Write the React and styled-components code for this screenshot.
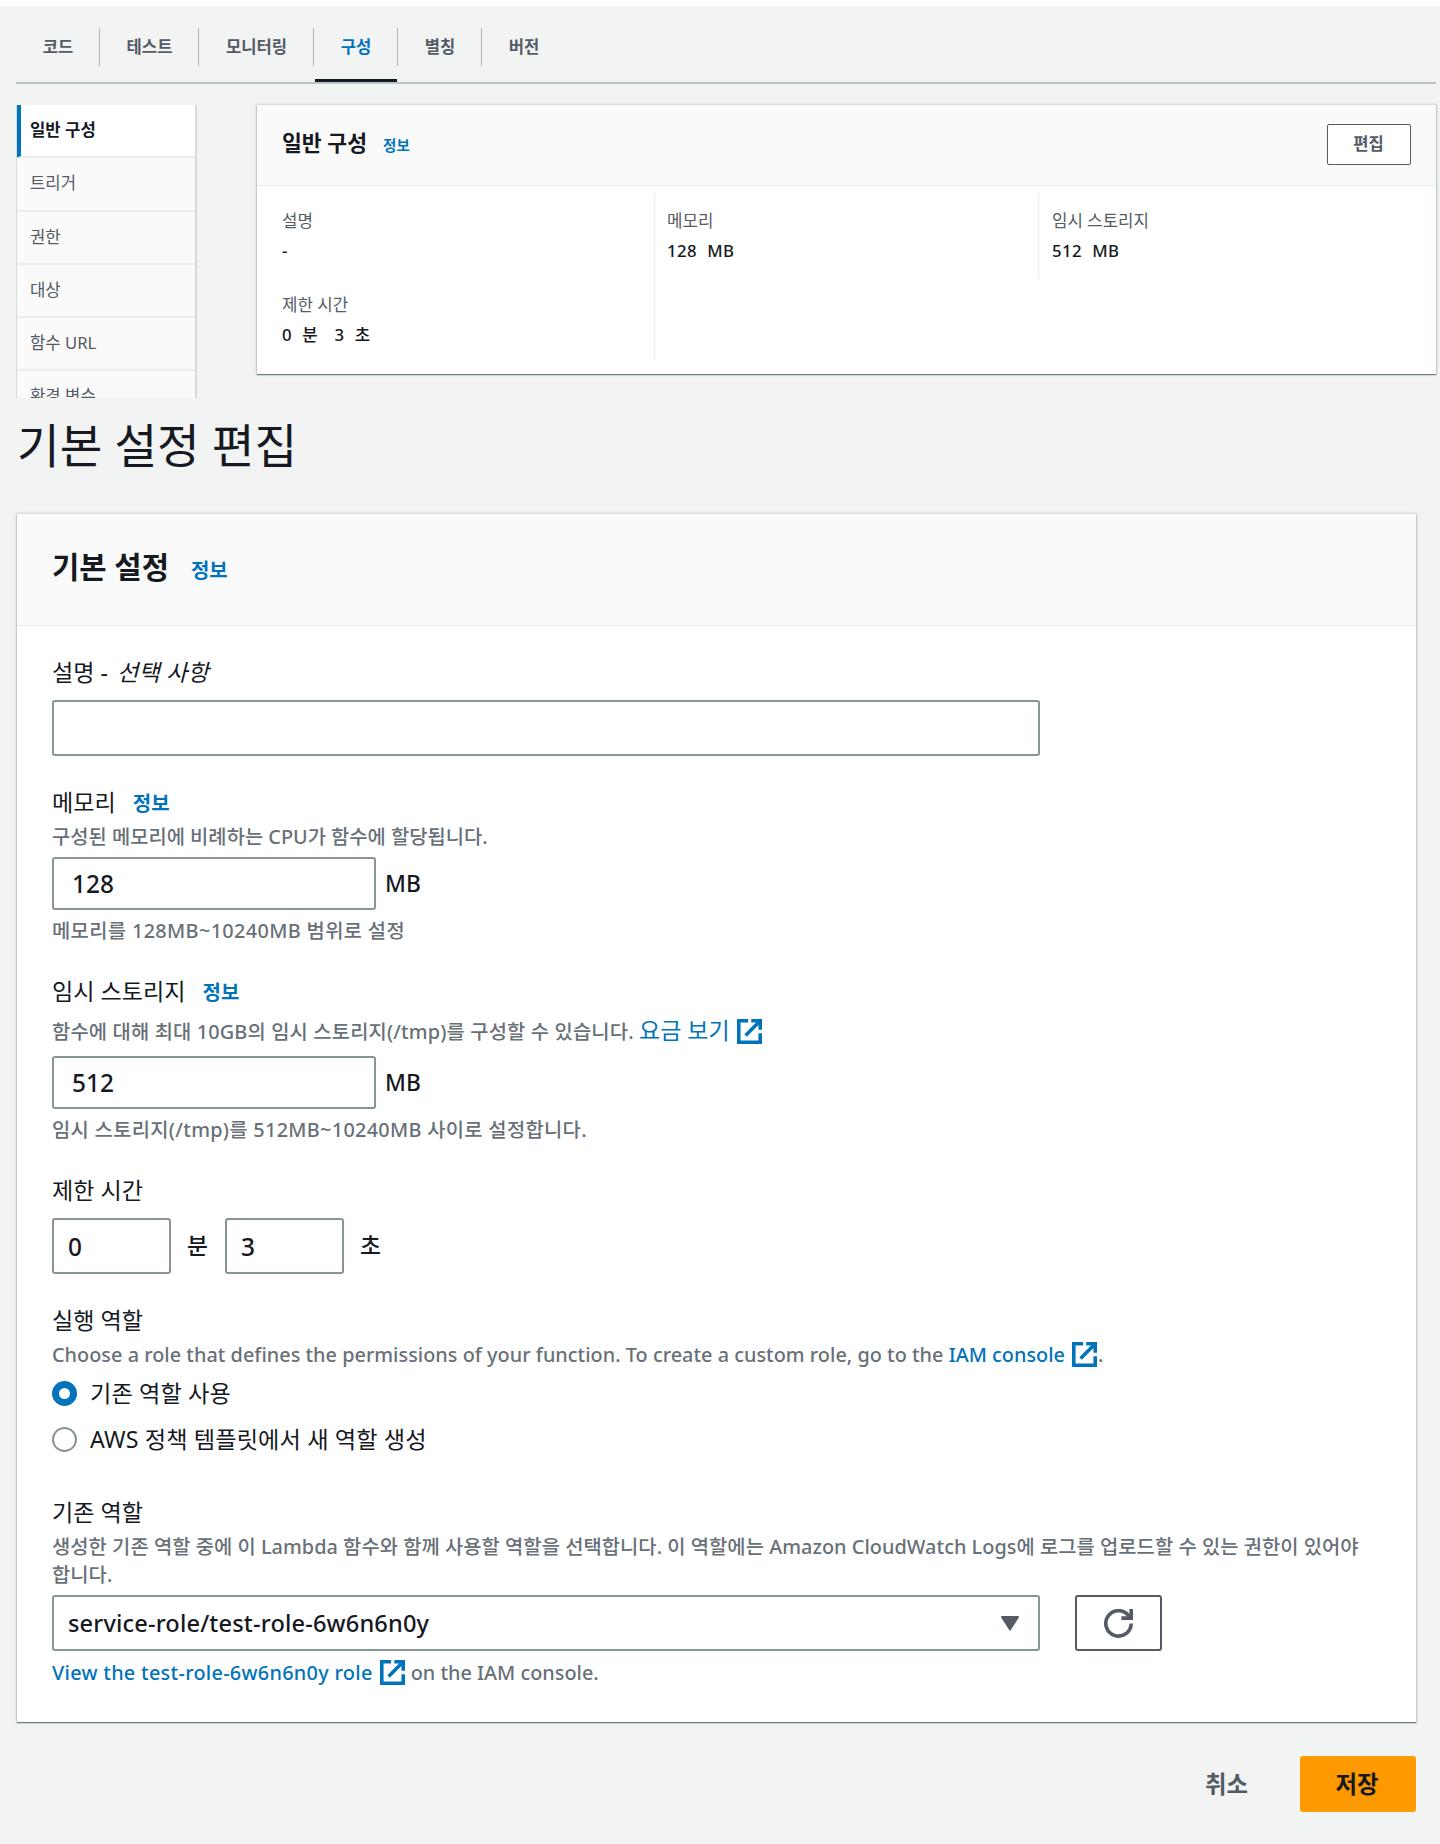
import React from 'react';
import styled, { createGlobalStyle } from 'styled-components';

const GlobalStyle = createGlobalStyle`
  * {
    box-sizing: border-box;
  }
  body {
    margin: 0;
    background: #f2f4f4;
    color: #16191f;
    font-family: 'Noto Sans', 'Noto Sans CJK KR', sans-serif;
  }
  h1, h2, h3, p {
    margin: 0;
    font-weight: 400;
  }
`;

const Page = styled.div`
  height: 1844px;
  border-top: 6px solid #fff;
  overflow: hidden;
`;

const Tabs = styled.nav`
  display: flex;
  height: 78px;
  margin: 0 4px 0 16px;
  border-bottom: 2px solid #b9c5c6;
`;
const Tab = styled.button`
  position: relative;
  width: ${(props) => props.$width}px;
  height: 76px;
  padding: 3px 0 0;
  border: 0;
  background: none;
  color: ${(props) => (props.$active ? '#0073bb' : '#545b64')};
  font-family: inherit;
  font-size: 16.6px;
  font-weight: 700;

  &:not(:last-child)::after {
    content: '';
    position: absolute;
    top: 22px;
    right: 0;
    width: 1px;
    height: 38px;
    background: #aab7b8;
  }
  &::before {
    content: '';
    position: absolute;
    left: 1px;
    right: 1px;
    bottom: 0;
    height: 3px;
    background: ${(props) => (props.$active ? '#16191f' : 'transparent')};
  }
`;

const Overview = styled.div`
  display: flex;
  align-items: flex-start;
  gap: 60px;
  height: 314px;
  padding: 21px 4px 0 16px;
`;
const SideNav = styled.ul`
  width: 181px;
  height: 293px;
  margin: 0;
  padding: 0;
  overflow: hidden;
  list-style: none;
  border: solid #d5dbdb;
  border-width: 0 2px 0 1px;
`;
const SideItem = styled.li`
  height: 53.3px;
  margin-left: ${(props) => (props.$active ? -1 : 0)}px;
  padding-left: ${(props) => (props.$active ? 9 : 13)}px;
  border-left: ${(props) => (props.$active ? '5px solid #0073bb' : 0)};
  border-bottom: 2px solid #eaeded;
  background: ${(props) => (props.$active ? '#fff' : '#fafafa')};
  color: ${(props) => (props.$active ? '#16191f' : '#545b64')};
  font-size: 16.7px;
  font-weight: ${(props) => (props.$active ? 700 : 400)};
  line-height: 50px;
`;

const Panel = styled.section`
  background: #fff;
  box-shadow: 0 1px 1px 0 rgba(0, 28, 36, 0.5), 0 0 2px 1px rgba(0, 28, 36, 0.16);
`;
const SummaryPanel = styled(Panel)`
  flex: 1;
  height: 269px;
`;
const SummaryHeader = styled.header`
  display: flex;
  align-items: center;
  height: 81px;
  padding: 0 25px 3px 25px;
  background: #fafafa;
  border-bottom: 1px solid #eaeded;

  h2 {
    font-size: 21.6px;
    font-weight: 700;
    line-height: 30px;
    margin-top: -1px;
  }
`;
const SummaryInfo = styled.a`
  margin: 3px 0 0 16px;
  color: #0073bb;
  font-size: 14.5px;
  font-weight: 700;
  line-height: 20px;
`;
const EditButton = styled.button`
  width: 84px;
  height: 41px;
  margin: 2px 0 0 auto;
  padding: 0 1px 4px 0;
  border: 1px solid #545b64;
  border-radius: 2px;
  background: #fff;
  color: #545b64;
  font-family: inherit;
  font-size: 16.6px;
  font-weight: 700;
`;
const SummaryBody = styled.div`
  display: grid;
  grid-template-columns: 398px 384px 1fr;
  padding-top: 8px;
`;
const SummaryColumn = styled.div`
  height: ${(props) => props.$height}px;
  padding-left: ${(props) => props.$indent || 12}px;
  border-right: ${(props) => (props.$divider ? '1px solid #eaeded' : 0)};
`;
const Pair = styled.dl`
  height: 83.5px;
  margin: 0;
  padding-top: 13px;
  font-size: 16.8px;

  dt {
    color: #545b64;
    line-height: 27px;
  }
  dd {
    margin: 4px 0 0;
    font-weight: 500;
    line-height: 26px;
    letter-spacing: 0.4px;
    word-spacing: 5.5px;
  }
`;
const Seconds = styled.span`
  margin-left: 6px;
`;

const Title = styled.h1`
  height: 116px;
  padding-left: 17px;
  font-size: 46.4px;
  line-height: 94px;
`;
const FormPanel = styled(Panel)`
  width: 1399px;
  height: 1208px;
  margin-left: 17px;
`;
const FormHeader = styled.header`
  display: flex;
  align-items: center;
  height: 112px;
  padding: 0 35px 5px;
  background: #fafafa;
  border-bottom: 1px solid #eaeded;

  h2 {
    margin-top: -1px;
    font-size: 29.7px;
    font-weight: 700;
    line-height: 40px;
  }
`;
const Info = styled.a`
  margin: ${(props) => props.$drop || 1}px 0 0 ${(props) => props.$gap || 17}px;
  color: #0073bb;
  font-size: 20px;
  font-weight: 700;
  line-height: 32px;
`;
const FormBody = styled.div`
  padding: 31px 36px 0 35px;
`;
const Field = styled.div`
  margin-top: ${(props) => props.$top || 0}px;
`;
const Label = styled.h3`
  display: flex;
  height: 32px;
  font-size: 23.1px;
  line-height: 30px;
  white-space: pre;
`;
const Optional = styled.em`
  margin-left: 3px;
  letter-spacing: 0.2px;
`;
const Hint = styled.p`
  margin-top: ${(props) => props.$top}px;
  color: #687078;
  font-size: 19.85px;
  font-weight: 500;
  line-height: 28px;
  letter-spacing: ${(props) => props.$spacing || 0}px;
  word-break: keep-all;
`;
const Link = styled.a`
  color: #0073bb;
  font-size: ${(props) => (props.$large ? '23px' : 'inherit')};
  font-weight: ${(props) => (props.$large ? 400 : 500)};
  letter-spacing: ${(props) => props.$spacing || 0}px;
  line-height: 20px;
  white-space: nowrap;
`;
const Row = styled.div`
  display: flex;
  align-items: center;
  margin-top: ${(props) => props.$top}px;
  font-size: 22.8px;
`;
const Input = styled.input`
  width: ${(props) => props.$width}px;
  height: ${(props) => props.$height || 56}px;
  padding: 0 ${(props) => props.$pad || 14}px;
  border: 2px solid #879596;
  border-radius: 3px;
  background: #fff;
  color: #16191f;
  font-family: inherit;
  font-size: 24.4px;
  font-weight: 500;
`;
const Unit = styled.span`
  margin: 0 ${(props) => props.$right || 0}px 0 ${(props) => props.$left}px;
  font-weight: 500;
  line-height: 32px;
`;
const Radio = styled.label`
  display: flex;
  align-items: center;
  gap: 13px;
  height: 28px;
  margin-top: ${(props) => props.$top}px;
  font-size: 23.2px;
  line-height: 28px;
  letter-spacing: 0.12px;
`;
const RadioDot = styled.span`
  width: 25px;
  height: 25px;
  border: ${(props) => (props.$checked ? '7.5px solid #0073bb' : '2px solid #879596')};
  border-radius: 50%;
  background: #fff;
`;
const Select = styled.div`
  display: flex;
  align-items: center;
  justify-content: space-between;
  width: 988px;
  height: 56px;
  padding: 0 18px 0 14px;
  border: 2px solid #879596;
  border-radius: 3px;
  font-size: 23.6px;
  font-weight: 500;
  letter-spacing: 0.15px;
`;
const RefreshButton = styled.button`
  display: flex;
  align-items: center;
  justify-content: center;
  width: 87px;
  height: 56px;
  margin-left: 35px;
  padding: 0;
  border: 2px solid #545b64;
  border-radius: 3px;
  background: #fff;
`;
const ExternalSvg = styled.svg`
  width: 25px;
  height: 25px;
  margin: -5px 1px -5px 7px;
  vertical-align: 0;
  fill: none;
  stroke: #0073bb;
  stroke-width: 2;
`;

const Actions = styled.footer`
  display: flex;
  justify-content: flex-end;
  align-items: center;
  gap: 52px;
  padding: 34px 24px 0 0;
`;
const CancelButton = styled.button`
  padding: 0 0 2px;
  border: 0;
  background: none;
  color: #545b64;
  font-family: inherit;
  font-size: 23.4px;
  font-weight: 700;
`;
const SaveButton = styled(CancelButton)`
  width: 116px;
  height: 56px;
  padding: 0 2px 3px 0;
  border-radius: 3px;
  background: #ff9900;
  color: #16191f;
`;

const tabs = [
  { name: '코드', width: 84 },
  { name: '테스트', width: 99 },
  { name: '모니터링', width: 115 },
  { name: '구성', width: 84, active: true },
  { name: '별칭', width: 84 },
  { name: '버전', width: 84 },
];

const menus = ['일반 구성', '트리거', '권한', '대상', '함수 URL', '환경 변수'];

const ExternalIcon = () => (
  <ExternalSvg viewBox="1 1 14 14">
    <path d="M9 2h5v5" />
    <path d="M5.8 10.2L14 2" />
    <path d="M14 9v5H2V2h5.2" />
  </ExternalSvg>
);

const CaretIcon = () => (
  <svg width="20" height="17" viewBox="0 0 20 17">
    <path d="M2 2h16l-8 12.5z" fill="#545b64" stroke="#545b64" strokeWidth="2" strokeLinejoin="round" />
  </svg>
);

const RefreshIcon = () => (
  <svg width="29" height="29" viewBox="0 0 16 16" fill="none" stroke="#545b64" strokeWidth="2">
    <path d="M9.6 5H15V0" />
    <path d="M15 8a7 7 0 1 1-1.2-4L15 5" />
  </svg>
);

const Item = ({ name, children }) => (
  <Pair>
    <dt>{name}</dt>
    <dd>{children}</dd>
  </Pair>
);

const App = () => {
  return (
    <Page>
      <GlobalStyle />
      <Tabs>
        {tabs.map((tab) => (
          <Tab key={tab.name} $width={tab.width} $active={tab.active}>
            {tab.name}
          </Tab>
        ))}
      </Tabs>
      <Overview>
        <SideNav>
          {menus.map((menu, index) => (
            <SideItem key={menu} $active={index === 0}>
              {menu}
            </SideItem>
          ))}
        </SideNav>
        <SummaryPanel>
          <SummaryHeader>
            <h2>일반 구성</h2>
            <SummaryInfo>정보</SummaryInfo>
            <EditButton>편집</EditButton>
          </SummaryHeader>
          <SummaryBody>
            <SummaryColumn $height={167} $indent={25} $divider>
              <Item name="설명">-</Item>
              <Item name="제한 시간">
                0 분 <Seconds>3 초</Seconds>
              </Item>
            </SummaryColumn>
            <SummaryColumn $height={84} $divider>
              <Item name="메모리">128 MB</Item>
            </SummaryColumn>
            <SummaryColumn $height={84} $indent={13}>
              <Item name="임시 스토리지">512 MB</Item>
            </SummaryColumn>
          </SummaryBody>
        </SummaryPanel>
      </Overview>

      <Title>기본 설정 편집</Title>
      <FormPanel>
        <FormHeader>
          <h2>기본 설정</h2>
          <Info $gap={22} $drop={7}>정보</Info>
        </FormHeader>
        <FormBody>
          <Field>
            <Label>설명 - <Optional>선택 사항</Optional></Label>
            <Row $top={11}>
              <Input $width={988} />
            </Row>
          </Field>
          <Field $top={31}>
            <Label>메모리<Info>정보</Info></Label>
            <Hint $top={4}>구성된 메모리에 비례하는 CPU가 함수에 할당됩니다.</Hint>
            <Row $top={6}>
              <Input $width={324} $height={53} $pad={18} defaultValue="128" />
              <Unit $left={9}>MB</Unit>
            </Row>
            <Hint $top={7} $spacing={0.35}>메모리를 128MB~10240MB 범위로 설정</Hint>
          </Field>
          <Field $top={31}>
            <Label>임시 스토리지<Info>정보</Info></Label>
            <Hint $top={10} $spacing={0.15}>
              함수에 대해 최대 10GB의 임시 스토리지(/tmp)를 구성할 수 있습니다.{' '}
              <Link $large>요금 보기<ExternalIcon /></Link>
            </Hint>
            <Row $top={10}>
              <Input $width={324} $height={53} $pad={18} defaultValue="512" />
              <Unit $left={9}>MB</Unit>
            </Row>
            <Hint $top={7} $spacing={0.3}>임시 스토리지(/tmp)를 512MB~10240MB 사이로 설정합니다.</Hint>
          </Field>
          <Field $top={31}>
            <Label>제한 시간</Label>
            <Row $top={11}>
              <Input $width={119} defaultValue="0" />
              <Unit $left={16} $right={17}>분</Unit>
              <Input $width={119} defaultValue="3" />
              <Unit $left={16}>초</Unit>
            </Row>
          </Field>
          <Field $top={31}>
            <Label>실행 역할</Label>
            <Hint $top={4} $spacing={0.02}>
              Choose a role that defines the permissions of your function. To create a custom role, go to the{' '}
              <Link>IAM console<ExternalIcon /></Link>.
            </Hint>
            <Radio $top={10}>
              <RadioDot $checked />
              기존 역할 사용
            </Radio>
            <Radio $top={18}>
              <RadioDot />
              AWS 정책 템플릿에서 새 역할 생성
            </Radio>
          </Field>
          <Field $top={44}>
            <Label>기존 역할</Label>
            <Hint $top={4} $spacing={0.04}>
              생성한 기존 역할 중에 이 Lambda 함수와 함께 사용할 역할을 선택합니다. 이 역할에는 Amazon CloudWatch Logs에 로그를 업로드할 수 있는 권한이 있어야 합니다.
            </Hint>
            <Row $top={6}>
              <Select>
                service-role/test-role-6w6n6n0y
                <CaretIcon />
              </Select>
              <RefreshButton>
                <RefreshIcon />
              </RefreshButton>
            </Row>
            <Hint $top={8}>
              <Link $spacing={0.3}>View the test-role-6w6n6n0y role<ExternalIcon /></Link> on the IAM console.
            </Hint>
          </Field>
        </FormBody>
      </FormPanel>
      <Actions>
        <CancelButton>취소</CancelButton>
        <SaveButton>저장</SaveButton>
      </Actions>
    </Page>
  );
};

export default App;
